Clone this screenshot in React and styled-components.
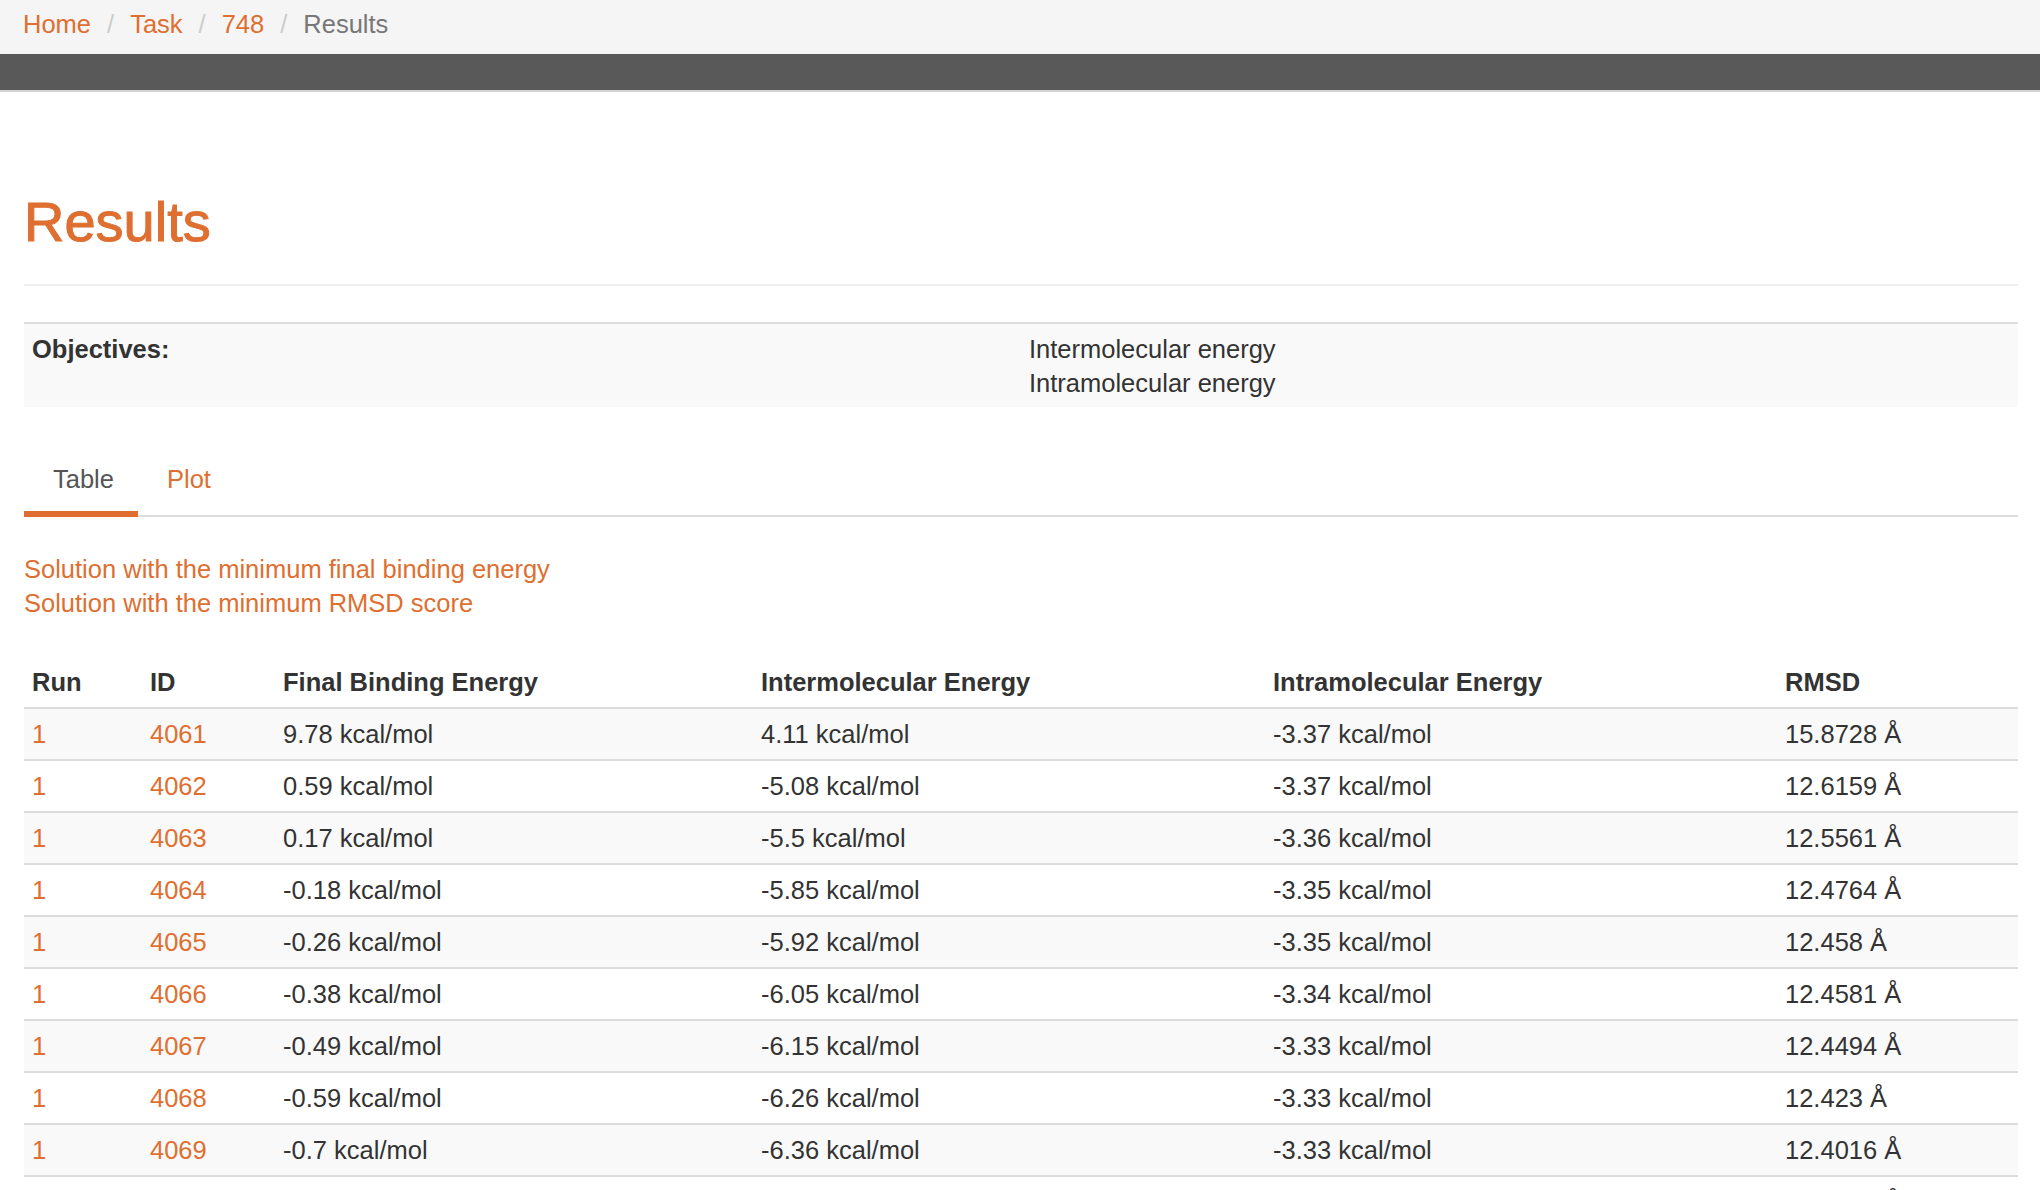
import React from "react";
import styled, { createGlobalStyle } from "styled-components";

const Global = createGlobalStyle`
  html, body { margin: 0; padding: 0; background: #fff; }
  body {
    font-family: "Liberation Sans", Arial, Helvetica, sans-serif;
    font-size: 25.5px;
    line-height: 34px;
    color: #333;
  }
  * { box-sizing: border-box; }
`;

const ORANGE = "#de6f31";

const Breadcrumb = styled.nav`
  display: flex;
  align-items: flex-start;
  height: 54px;
  padding: 6.5px 21px 0 23px;
  background: #f5f5f5;
  line-height: 34px;
`;

const Crumb = styled.a`
  color: ${(p) => (p.$active ? "#777" : ORANGE)};
  text-decoration: none;
`;

const Sep = styled.span`
  color: #ccc;
  padding: 0 16px;
`;

const DarkBar = styled.div`
  height: 38px;
  background: #595959;
  border-bottom: 2px solid #d3d3d3;
`;

const Container = styled.main`
  padding: 0 22px 0 24px;
`;

const PageHeader = styled.header`
  margin-top: 99.5px;
  padding-bottom: 32px;
  border-bottom: 2px solid #eee;
`;

const Title = styled.h1`
  margin: 0;
  font-size: 56px;
  line-height: 60.5px;
  font-weight: 400;
  color: ${ORANGE};
  -webkit-text-stroke: 1px ${ORANGE};
`;

const InfoTable = styled.table`
  width: 100%;
  margin-top: 35.7px;
  border-collapse: collapse;
  background: #f9f9f9;
  border-top: 2px solid #ddd;
`;

const InfoCell = styled.td`
  width: 50%;
  padding: 8px 8px 7.5px;
  vertical-align: top;
  line-height: 34px;
  font-weight: ${(p) => (p.$label ? 700 : 400)};
`;

const ValueLine = styled.div``;

const Tabs = styled.ul`
  display: flex;
  list-style: none;
  margin: 38.5px 0 0;
  padding: 0;
  border-bottom: 2px solid #ddd;
`;

const Tab = styled.li`
  margin-bottom: -2px;
  padding: 16px 24px 15.8px 29px;
  line-height: 34px;
  color: ${(p) => (p.$active ? "#555" : ORANGE)};
  border-bottom: 6px solid ${(p) => (p.$active ? ORANGE : "transparent")};
  cursor: pointer;
`;

const LinkList = styled.div`
  margin-top: 36px;
  display: flex;
  flex-direction: column;
  line-height: 33.5px;
`;

const TextLink = styled.a`
  color: ${ORANGE};
  text-decoration: none;
  align-self: flex-start;
`;

const Table = styled.table`
  width: 100%;
  margin-top: 36.3px;
  border-collapse: collapse;
  table-layout: fixed;
`;

const Th = styled.th`
  text-align: left;
  font-weight: 700;
  padding: 8px;
  line-height: 34px;
  border-bottom: 2px solid #ddd;
`;

const Row = styled.tr`
  background: ${(p) => (p.$striped ? "#f9f9f9" : "#fff")};
`;

const Td = styled.td`
  padding: 8px;
  line-height: 34px;
  border-bottom: 2px solid #ddd;
  white-space: nowrap;
  color: ${(p) => (p.$link ? ORANGE : "#333")};
`;

const rows = [
  ["4061", "9.78", "4.11", "-3.37", "15.8728"],
  ["4062", "0.59", "-5.08", "-3.37", "12.6159"],
  ["4063", "0.17", "-5.5", "-3.36", "12.5561"],
  ["4064", "-0.18", "-5.85", "-3.35", "12.4764"],
  ["4065", "-0.26", "-5.92", "-3.35", "12.458"],
  ["4066", "-0.38", "-6.05", "-3.34", "12.4581"],
  ["4067", "-0.49", "-6.15", "-3.33", "12.4494"],
  ["4068", "-0.59", "-6.26", "-3.33", "12.423"],
  ["4069", "-0.7", "-6.36", "-3.33", "12.4016"],
  ["4070", "-0.8", "-6.46", "-3.32", "12.3869"],
  ["4071", "-0.91", "-6.57", "-3.32", "12.3712"],
];

export default function App() {
  return (
    <>
      <Global />
      <Breadcrumb>
        <Crumb href="#">Home</Crumb>
        <Sep>/</Sep>
        <Crumb href="#">Task</Crumb>
        <Sep>/</Sep>
        <Crumb href="#">748</Crumb>
        <Sep>/</Sep>
        <Crumb $active>Results</Crumb>
      </Breadcrumb>
      <DarkBar />
      <Container>
        <PageHeader>
          <Title>Results</Title>
        </PageHeader>

        <InfoTable>
          <tbody>
            <tr>
              <InfoCell $label>Objectives:</InfoCell>
              <InfoCell>
                <ValueLine>Intermolecular energy</ValueLine>
                <ValueLine>Intramolecular energy</ValueLine>
              </InfoCell>
            </tr>
          </tbody>
        </InfoTable>

        <Tabs>
          <Tab $active>Table</Tab>
          <Tab>Plot</Tab>
        </Tabs>

        <LinkList>
          <TextLink href="#">Solution with the minimum final binding energy</TextLink>
          <TextLink href="#">Solution with the minimum RMSD score</TextLink>
        </LinkList>

        <Table>
          <colgroup>
            <col style={{ width: 118 }} />
            <col style={{ width: 133 }} />
            <col style={{ width: 478 }} />
            <col style={{ width: 512 }} />
            <col style={{ width: 512 }} />
            <col />
          </colgroup>
          <thead>
            <tr>
              <Th>Run</Th>
              <Th>ID</Th>
              <Th>Final Binding Energy</Th>
              <Th>Intermolecular Energy</Th>
              <Th>Intramolecular Energy</Th>
              <Th>RMSD</Th>
            </tr>
          </thead>
          <tbody>
            {rows.map((r, i) => (
              <Row key={r[0]} $striped={i % 2 === 0}>
                <Td $link>1</Td>
                <Td $link>{r[0]}</Td>
                <Td>{r[1]} kcal/mol</Td>
                <Td>{r[2]} kcal/mol</Td>
                <Td>{r[3]} kcal/mol</Td>
                <Td>{r[4]} Å</Td>
              </Row>
            ))}
          </tbody>
        </Table>
      </Container>
    </>
  );
}
